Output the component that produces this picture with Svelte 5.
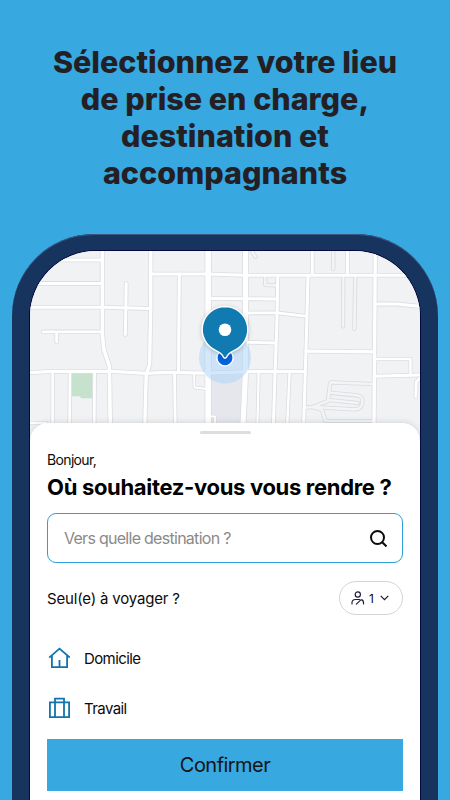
<script>
	let destination = $state("");
	let travellers = $state(1);

	const greenArea = "M72 373H92.5V398.3H81L80 396.3H72Z";
	const greyBlock = "M210 375H243L241 425H210Z";

	const roads = [
		{ d: "M102.4 251V336L104 350L109.3 366L110.3 425", w: 3.6 },
		{ d: "M40 260H102", w: 3 },
		{ d: "M30 283.4H102", w: 3 },
		{ d: "M30 307.3H102L150 308.6", w: 3 },
		{ d: "M43 331.8H102M56.6 332V342", w: 2.8 },
		{ d: "M126.2 283.5L125.4 334.5", w: 3 },
		{ d: "M150.8 251L150.7 308L149.6 364L146.2 375L144.8 425", w: 3.4 },
		{ d: "M151 274H208L245 275.2H420", w: 3 },
		{ d: "M179.3 274L178.5 372", w: 3 },
		{ d: "M30 372.6L52 371.4H112L146 373.4L167 372.4L208 373.2L245 371.7H304", w: 3.2 },
		{ d: "M52.6 372V425", w: 2.6 },
		{ d: "M70 372L69.5 425", w: 2.6 },
		{ d: "M94.6 372L94.2 425", w: 2.8 },
		{ d: "M174.5 373L175.3 425", w: 2.8 },
		{ d: "M30 423H46", w: 2.4 },
		{ d: "M194 374L194.5 387.5L207 389", w: 1.8 },
		{ d: "M210 416.4H215V425", w: 1.8 },
		{ d: "M208 298.5L278 299", w: 3 },
		{ d: "M277.8 276L276.7 330L275 373L273.4 425", w: 3 },
		{ d: "M308 276L306 350L303.6 425", w: 3 },
		{ d: "M246 313L277 312.8L305 316.2", w: 2.8 },
		{ d: "M245 342.2L275 343", w: 2.8 },
		{ d: "M306 351.2L374 351.8", w: 3.2 },
		{ d: "M258.7 372L257.4 425", w: 2.2 },
		{ d: "M289.6 372L287.2 425", w: 2.4 },
		{ d: "M312.3 251V275", w: 2.8 },
		{ d: "M347.4 251V275", w: 3 },
		{ d: "M375.3 251L374.4 376L374 425", w: 3.4 },
		{ d: "M375 304H397L420 306.4", w: 3.2 },
		{ d: "M375 359H410.3L410.6 375", w: 2.4 },
		{ d: "M374 376.2L420 375", w: 3 },
		{ d: "M420 378L416.2 382L415.8 396.5", w: 2.8 },
		{ d: "M208.1 251V425", w: 5.6 },
		{ d: "M245.6 251L245.3 377L243 425", w: 5.2 }
	];

	// narrow service roads, filled with the ground colour
	const lanes = [
		"M333.3 251V269",
		"M343.3 277L343 326.5",
		"M355.2 277L354.4 329",
		"M265 277L265.4 285L277 285.4",
		"M252 251L255.5 257",
		"M305 407.7L313 407L328 401L330 384Q330.2 382.3 332 382.4L372 384",
		"M330.4 392.8L357 395.3Q362.6 396.3 362.6 401Q362.6 409 355 409.4L313 407",
		"M328.5 400L358 403",
		"M313 407L322 410L325.5 421H372"
	];

	const places = ["Domicile", "Travail"];
</script>

<main class="page">
	<h1 class="headline">Sélectionnez votre lieu<br />de prise en charge,<br />destination et<br />accompagnants</h1>

	<div class="phone">
		<div class="screen">
			<svg class="map" viewBox="30 251 390 190" aria-hidden="true">
				<rect x="30" y="251" width="390" height="190" fill="#f1f2f4" />
				<path d={greyBlock} fill="#e6e7ec" />
				<path d={greenArea} fill="#c6e2cc" />
				<g fill="none" stroke-linecap="round" stroke-linejoin="round">
					{#each lanes as d}
						<path {d} stroke="#d9dade" stroke-width="4.2" />
					{/each}
					{#each roads as road}
						<path d={road.d} stroke="#dcdde1" stroke-width={road.w + 1.6} />
					{/each}
					{#each lanes as d}
						<path {d} stroke="#f3f4f6" stroke-width="2.6" />
					{/each}
					{#each roads as road}
						<path d={road.d} stroke="#fff" stroke-width={road.w} />
					{/each}
				</g>
				<circle cx="225" cy="357.5" r="26" fill="#a9d2fa" fill-opacity="0.5" />
				<circle cx="225" cy="357.8" r="8.8" fill="#fff" />
				<circle cx="225" cy="357.8" r="7.4" fill="#0364df" />
				<path
					class="pin"
					d="M225 306.5A23 23 0 0 0 216 350.6C220.8 352.8 222.2 354.3 223.3 356.8Q225 359.6 226.7 356.8C227.8 354.3 229.2 352.8 234 350.6A23 23 0 0 0 225 306.5Z"
					fill="#117ab0"
					stroke="#fff"
					stroke-width="1.5"
				/>
				<circle cx="225" cy="329.7" r="6.3" fill="#fff" />
			</svg>

			<section class="sheet">
				<span class="handle"></span>
				<p class="hello">Bonjour,</p>
				<h2 class="question">Où souhaitez-vous vous rendre ?</h2>

				<label class="search">
					<input bind:value={destination} placeholder="Vers quelle destination ?" />
					<svg width="17" height="17" viewBox="0 0 17 17" fill="none" stroke="#0b0b0b" stroke-width="2">
						<circle cx="7.5" cy="7.5" r="6.5" />
						<path d="M12 12L16.5 16.5" />
					</svg>
				</label>

				<div class="travellers">
					<span>Seul(e) à voyager ?</span>
					<button class="count" onclick={() => travellers++}>
						<svg width="14" height="14" viewBox="0 0 14 14" fill="none" stroke="#1a1a35" stroke-width="1.15" stroke-linecap="round">
							<circle cx="6.8" cy="3.5" r="2.6" />
							<path d="M1 13V11.8Q1 8.5 4.5 8.5H8.6M5.4 13.1L9.3 9.3Q10.1 8.6 11 8.9Q12.6 9.6 12.6 13" />
						</svg>
						<span>{travellers}</span>
						<svg class="chevron" width="9" height="6" viewBox="0 0 9 6" fill="none" stroke="#1a1a35" stroke-width="1.2">
							<path d="M0.7 0.8L4.5 4.6L8.3 0.8" />
						</svg>
					</button>
				</div>

				<ul class="places">
					{#each places as place, i}
						<li>
							<svg width="22" height="22" viewBox="0 0 22 22" fill="none" stroke="#1173b0" stroke-width="1.8">
								{#if i === 0}
									<path d="M1.2 10.6L11.5 1.6L21.8 10.6M3.9 8.5V20.2H19.1V8.5M11.5 20V13" />
								{:else}
									<path d="M1.9 5.4H21.1V20.2H1.9ZM7 20V1.6H16V20" />
								{/if}
							</svg>
							<span>{place}</span>
						</li>
					{/each}
				</ul>

				<button class="confirm">Confirmer</button>
			</section>
		</div>
	</div>
</main>

<style>
	:global(body) {
		margin: 0;
		background: #37a8e0;
	}

	.page {
		display: flex;
		flex-direction: column;
		box-sizing: border-box;
		width: 450px;
		height: 800px;
		padding-top: 43px;
		overflow: hidden;
		background: #37a8e0;
		font-family: Inter, "Liberation Sans", sans-serif;
		color: #0b0b0b;
	}

	.headline {
		flex: none;
		height: 191px;
		margin: 0;
		font-size: 30.5px;
		font-weight: 800;
		line-height: 37px;
		text-align: center;
		color: #231f24;
	}

	.phone {
		flex: none;
		box-sizing: border-box;
		height: 700px;
		margin: 0 12px;
		padding: 17px 18px 0;
		border-radius: 82px 82px 0 0;
		background: #17345f;
		box-shadow: inset 0 1px 0 #40547f;
	}

	.screen {
		height: 680px;
		overflow: hidden;
		border-radius: 66px 66px 0 0;
		background: #f1f2f4;
		box-shadow: 0 0 0 1px #06083f;
	}

	.map {
		display: block;
		width: 390px;
		height: 190px;
	}

	.pin {
		filter: drop-shadow(0 1px 2px rgba(0, 0, 0, 0.2));
	}

	.sheet {
		position: relative;
		display: flex;
		flex-direction: column;
		box-sizing: border-box;
		height: 520px;
		margin-top: -18px;
		padding: 8px 17px 0;
		border-radius: 18px 18px 0 0;
		background: #fff;
		box-shadow: 0 0 7px rgba(0, 0, 0, 0.14);
	}

	.handle {
		align-self: center;
		width: 51px;
		height: 3px;
		border-radius: 2px;
		background: #dcdddd;
	}

	.hello {
		margin: 16px 0 0;
		font-size: 14px;
		line-height: 20px;
		letter-spacing: -0.65px;
	}

	.question {
		margin: 3px 0 0;
		font-size: 22px;
		font-weight: 700;
		line-height: 28px;
		letter-spacing: -0.32px;
		color: #000;
		white-space: nowrap;
	}

	.search {
		display: flex;
		align-items: center;
		box-sizing: border-box;
		height: 50px;
		margin-top: 12px;
		padding: 0 15px 0 16px;
		border: 1px solid #2f9fd8;
		border-radius: 9px;
	}

	.search input {
		flex: 1;
		min-width: 0;
		padding: 0;
		border: none;
		outline: none;
		background: transparent;
		font: 16px Inter, "Liberation Sans", sans-serif;
		letter-spacing: -0.72px;
	}

	.search input::placeholder {
		color: #8a8a8a;
		opacity: 1;
	}

	.travellers {
		display: flex;
		align-items: center;
		justify-content: space-between;
		margin-top: 18px;
		font-size: 15px;
		letter-spacing: -0.18px;
	}

	.count {
		display: flex;
		align-items: center;
		gap: 4px;
		box-sizing: border-box;
		width: 64px;
		height: 34px;
		padding: 0 0 0 11px;
		border: 1px solid #d3d4d8;
		border-radius: 17px;
		background: #fff;
		font: 12px Inter, sans-serif;
		color: #0b0b0b;
	}

	.chevron {
		margin-left: 2px;
	}

	.places {
		display: flex;
		flex-direction: column;
		gap: 28px;
		margin: 32px 0 0;
		padding: 0 0 0 1px;
		list-style: none;
	}

	.places li {
		display: flex;
		align-items: center;
		gap: 14px;
		height: 22px;
		font-size: 15px;
		letter-spacing: -0.6px;
	}

	.confirm {
		height: 52px;
		margin-top: 20px;
		padding: 0;
		border: none;
		background: #37a8e0;
		font: 20px Inter, "Liberation Sans", sans-serif;
		letter-spacing: -0.55px;
		color: #141216;
	}
</style>
